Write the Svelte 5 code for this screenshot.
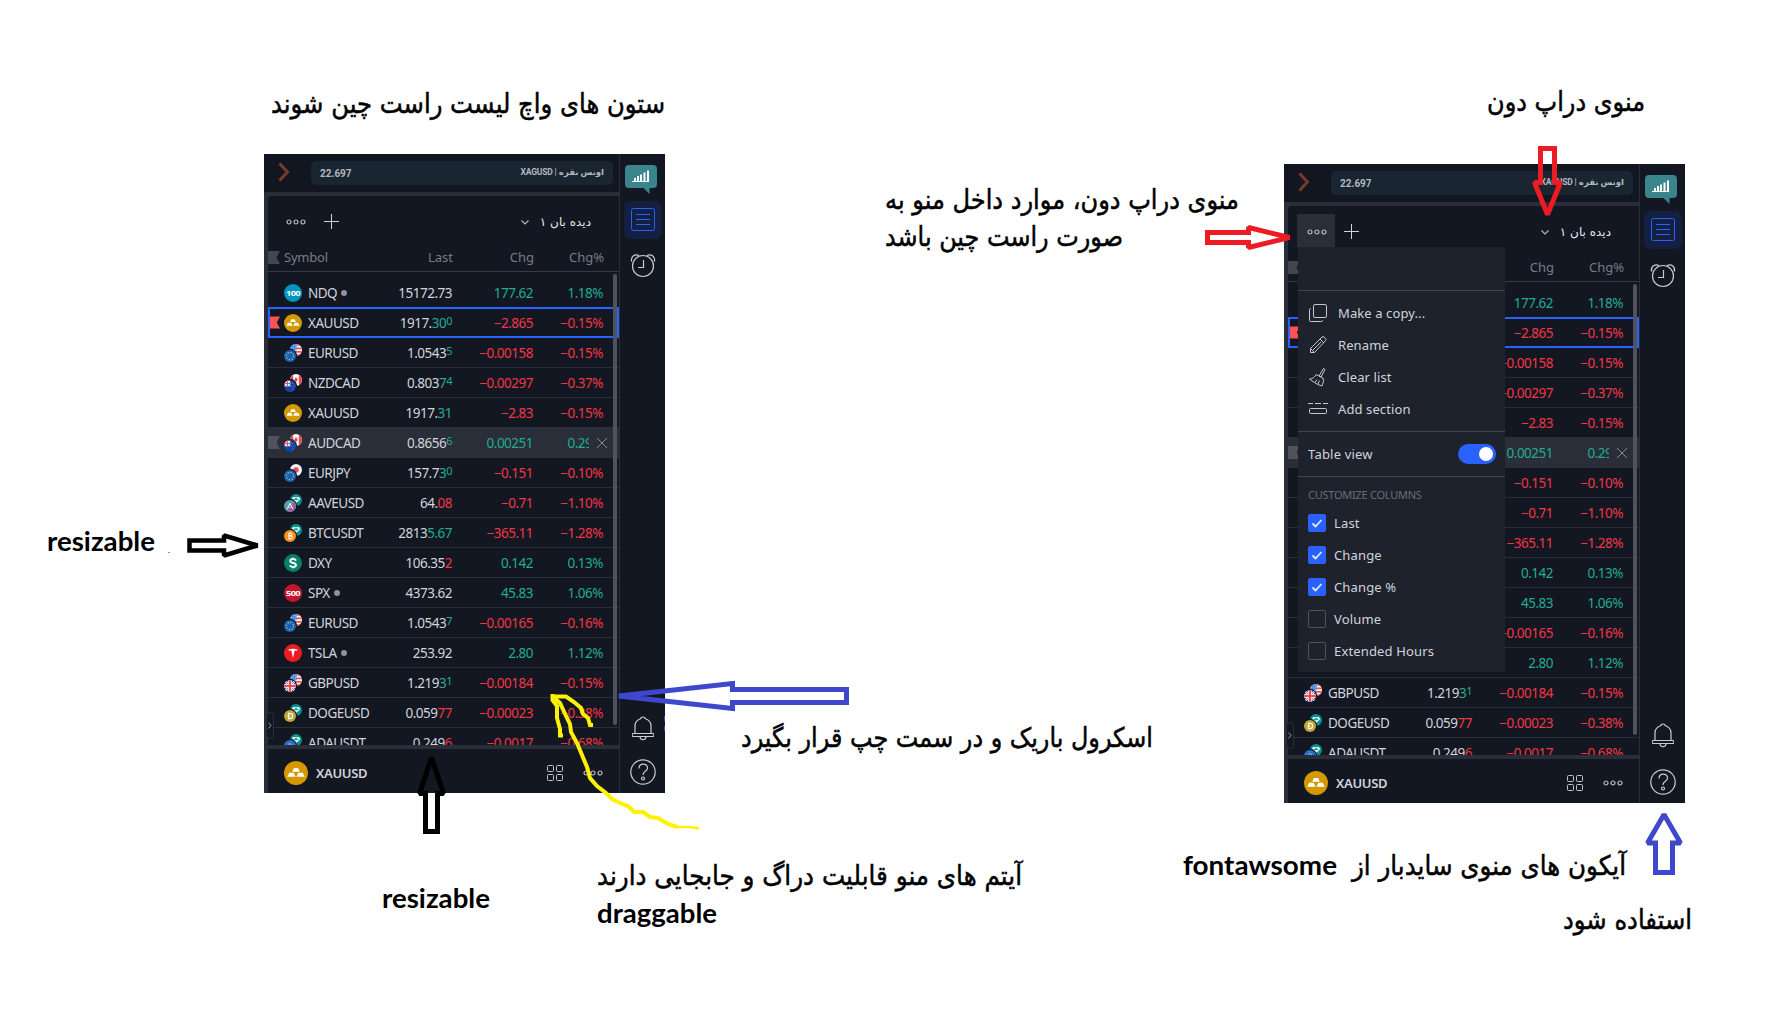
<script>
  const rows = [
    { icon: 'ndq', sym: 'NDQ', dot: true, last: '15172.73', chg: '177.62', pct: '1.18%', up: true },
    { icon: 'gold', sym: 'XAUUSD', last: '1917.', tick: '30', sup: '0', tickUp: true, chg: '−2.865', pct: '−0.15%', selected: true },
    { front: 'eu', back: 'us', sym: 'EURUSD', last: '1.0543', sup: '5', tickUp: true, chg: '−0.00158', pct: '−0.15%' },
    { front: 'nz', back: 'ca', sym: 'NZDCAD', last: '0.803', tick: '7', sup: '4', tickUp: true, chg: '−0.00297', pct: '−0.37%' },
    { icon: 'gold', sym: 'XAUUSD', last: '1917.', tick: '31', tickUp: true, chg: '−2.83', pct: '−0.15%' },
    { front: 'nz', back: 'ca', sym: 'AUDCAD', last: '0.8656', sup: '6', tickUp: true, chg: '0.00251', pct: '0.29%', up: true, hovered: true },
    { front: 'eu', back: 'jp', sym: 'EURJPY', last: '157.7', tick: '3', sup: '0', tickUp: true, chg: '−0.151', pct: '−0.10%' },
    { front: 'aave', back: 'tether', sym: 'AAVEUSD', last: '64.', tick: '08', chg: '−0.71', pct: '−1.10%' },
    { front: 'btc', back: 'tether', sym: 'BTCUSDT', last: '2813', tick: '5.67', tickUp: true, chg: '−365.11', pct: '−1.28%' },
    { icon: 'dxy', sym: 'DXY', last: '106.35', tick: '2', chg: '0.142', pct: '0.13%', up: true },
    { icon: 'spx', sym: 'SPX', dot: true, last: '4373.62', chg: '45.83', pct: '1.06%', up: true },
    { front: 'eu', back: 'us', sym: 'EURUSD', last: '1.0543', sup: '7', tickUp: true, chg: '−0.00165', pct: '−0.16%' },
    { icon: 'tsla', sym: 'TSLA', dot: true, last: '253.92', chg: '2.80', pct: '1.12%', up: true },
    { front: 'gb', back: 'us', sym: 'GBPUSD', last: '1.219', tick: '3', sup: '1', tickUp: true, chg: '−0.00184', pct: '−0.15%' },
    { front: 'doge', back: 'tether', sym: 'DOGEUSD', last: '0.059', tick: '77', chg: '−0.00023', pct: '−0.38%' },
    { front: 'ada', back: 'tether', sym: 'ADAUSDT', last: '0.249', tick: '6', chg: '−0.0017', pct: '−0.68%' }
  ];
  const columns = [
    { label: 'Last', on: true },
    { label: 'Change', on: true },
    { label: 'Change %', on: true },
    { label: 'Volume', on: false },
    { label: 'Extended Hours', on: false }
  ];
  const actions = [
    { label: 'Make a copy...', icon: 'copy' },
    { label: 'Rename', icon: 'pencil' },
    { label: 'Clear list', icon: 'broom' },
    { label: 'Add section', icon: 'section' }
  ];
  // x is the left edge of each note, w its width, y its baseline
  const notes = [
    { x: 271, y: 113, w: 394, t: 'ستون های واچ لیست راست چین شوند', fa: true },
    { x: 1487, y: 111, w: 158, t: 'منوی دراپ دون', fa: true },
    { x: 885, y: 209, w: 354, t: 'منوی دراپ دون، موارد داخل منو به', fa: true },
    { x: 885, y: 246, w: 238, t: 'صورت راست چین باشد', fa: true },
    { x: 741, y: 747, w: 412, t: 'اسکرول باریک و در سمت چپ قرار بگیرد', fa: true },
    { x: 597, y: 885, w: 425, t: 'آیتم های منو قابلیت دراگ و جابجایی دارند', fa: true },
    { x: 1352, y: 875, w: 274, t: 'آیکون های منوی سایدبار از', fa: true },
    { x: 1563, y: 929, w: 129, t: 'استفاده شود', fa: true },
    { x: 47, y: 551, w: 108, t: 'resizable' },
    { x: 382, y: 908, w: 108, t: 'resizable' },
    { x: 597, y: 923, w: 120, t: 'draggable' },
    { x: 1183, y: 875, w: 154, t: 'fontawsome' }
  ];
</script>

{#snippet gold(size)}
  <svg class="coin" width={size} height={size} viewBox="0 0 18 18">
    <circle cx="9" cy="9" r="9" fill="#d59900" />
    <path d="M7.4 5.2h3.2l1.2 2.8H6.2zM4 8.8h3.2l1.5 3H2.4zM10.8 8.8H14l1.6 3H9.3z" fill="#fff" />
  </svg>
{/snippet}

{#snippet flag(kind)}
  {#if kind === 'us'}
    <rect width="12" height="12" fill="#fff" />
    <path d="M0 1h12M0 4.4h12M0 7.8h12M0 11.2h12" stroke="#ef5350" stroke-width="1.7" />
    <rect width="6.5" height="6.5" fill="#2d8bea" />
    <path d="M1 1.6h5M1 3.4h5M1 5.2h5" stroke="#d5e8fb" stroke-width=".7" stroke-dasharray=".8 1.2" />
  {:else if kind === 'ca'}
    <rect width="12" height="12" fill="#fff" />
    <path d="M0 0h3.2v12H0zM8.8 0H12v12H8.8z" fill="#ef4a50" />
    <path d="M6 3l1.8 2.5L7 7.5H5l-.8-2z" fill="#ef4a50" />
  {:else if kind === 'jp'}
    <rect width="12" height="12" fill="#f0f3fa" /><circle cx="6" cy="6" r="2.7" fill="#ef4a50" />
  {:else if kind === 'tether'}
    <rect width="12" height="12" fill="#009393" />
    <path d="M3.2 3h5.6l1.4 2.2L6 9 1.8 5.2z" fill="#fff" /><path d="M4.3 4.2h3.4M6 4.2v2.6M3.4 5.5h5.2" stroke="#009393" stroke-width=".8" />
  {:else if kind === 'eu'}
    <rect width="12" height="12" fill="#1560bd" />
    <circle cx="6" cy="6" r="3.6" fill="none" stroke="#e3df35" stroke-width="1.1" stroke-dasharray="1.1 1.72" />
  {:else if kind === 'nz'}
    <rect width="12" height="12" fill="#0c47a8" />
    <path d="M1 1l5 5M6 1L1 6" stroke="#fff" stroke-width="1.6" /><path d="M3.5 0v6.5M0 3.5h6.5" stroke="#fff" stroke-width="2" />
    <path d="M3.5 0v6.5M0 3.5h6.5" stroke="#ef4a50" stroke-width="1" />
    <path d="M8.6 3v1M10 5.5v1M7.6 6v1M9 8.6v1" stroke="#e0637a" stroke-width="1" />
  {:else if kind === 'gb'}
    <rect width="12" height="12" fill="#1e5fbf" />
    <path d="M0 0l12 12M12 0L0 12" stroke="#fff" stroke-width="2.2" /><path d="M0 0l12 12M12 0L0 12" stroke="#ef4a50" stroke-width=".9" />
    <path d="M6 0v12M0 6h12" stroke="#fff" stroke-width="3.6" /><path d="M6 0v12M0 6h12" stroke="#ef4a50" stroke-width="2.2" />
  {:else if kind === 'aave'}
    <rect width="12" height="12" fill="#5b9dac" /><path d="M12 0v12H2z" fill="#9a62a3" />
    <path d="M3.3 8.8L6 3.4l2.7 5.4M4.8 7.4h.7M6.6 7.4h.7" stroke="#fff" fill="none" stroke-width="1" />
  {:else if kind === 'btc'}
    <rect width="12" height="12" fill="#f7931a" />
    <path d="M4.7 3.3h2a1.2 1.2 0 010 2.5H4.8h2.2a1.4 1.4 0 010 2.9H4.4M5 3v6M6.2 2.2v1M6 8.8v1" stroke="#fff" fill="none" stroke-width="1" />
  {:else if kind === 'doge'}
    <rect width="12" height="12" fill="#c2a633" />
    <path d="M4.6 3.3h1.3a2.7 2.7 0 010 5.4H4.6zM3.3 6h3" stroke="#fff" fill="none" stroke-width="1.1" />
  {:else if kind === 'ada'}
    <rect width="12" height="12" fill="#2a71d0" /><circle cx="6" cy="6" r="2.2" fill="none" stroke="#fff" stroke-dasharray="1 1" />
  {/if}
{/snippet}

{#snippet symbolIcon(r)}
  {#if r.icon === 'gold'}
    {@render gold(18)}
  {:else if r.icon}
    <svg class="coin" width="18" height="18" viewBox="0 0 18 18">
      {#if r.icon === 'ndq'}
        <circle cx="9" cy="9" r="9" fill="#0097bf" /><text class="badge" x="9" y="11.6" textLength="14" lengthAdjust="spacingAndGlyphs">100</text>
      {:else if r.icon === 'spx'}
        <circle cx="9" cy="9" r="9" fill="#c5162e" /><text class="badge" x="9" y="11.6" textLength="14" lengthAdjust="spacingAndGlyphs">500</text>
      {:else if r.icon === 'dxy'}
        <circle cx="9" cy="9" r="9" fill="#08806a" />
        <path d="M12 6.6C11.5 5.4 10.3 5 9 5 7.3 5 6.2 5.8 6.2 7c0 2.8 5.8 1.2 5.8 4 0 1.3-1.3 2.1-3 2.1-1.5 0-2.7-.6-3.1-1.8M9 3.8v1.500M9 12.800v1.500" stroke="#fff" stroke-width="1.9" fill="none" />
      {:else}
        <circle cx="9" cy="9" r="9" fill="#ec1c24" />
        <path d="M4.5 5.6c3-1.3 6-1.3 9 0l-.6 1.3c-1-.3-1.6-.4-2.2-.4L9 14 7.3 6.5c-.6 0-1.2.1-2.2.4z" fill="#fff" />
      {/if}
    </svg>
  {:else}
    <svg class="coin" width="18" height="18" viewBox="0 0 18 18">
      <g transform="translate(6 0)" clip-path="url(#disc)">{@render flag(r.back)}</g>
      <circle cx="6" cy="12" r="7.2" class="ring" />
      <g transform="translate(0 6)" clip-path="url(#disc)">{@render flag(r.front)}</g>
    </svg>
  {/if}
{/snippet}

{#snippet ellipsis()}
  <svg width="20" height="6" viewBox="0 0 20 6" fill="none" stroke="#b8bbc5" stroke-width="1.2"><circle cx="3" cy="3" r="2" /><circle cx="10" cy="3" r="2" /><circle cx="17" cy="3" r="2" /></svg>
{/snippet}

{#snippet ribbon(cls)}
  <svg class="ribbon {cls}" width="12" height="13" viewBox="0 0 12 13"><path d="M0 0h12L8.5 6.5 12 13H0z" /></svg>
{/snippet}

{#snippet panel(open)}
  <div class="main">
    <header class="ticker">
      <svg class="collapse" width="14" height="20" viewBox="0 0 14 20"><path d="M2.5 1.5l8 8.5-8 8.5" fill="none" stroke="#793a2b" stroke-width="3" /></svg>
      <div class="pill"><span>22.697</span><span class="pair" dir="rtl">اونس نقره | <bdi>XAGUSD</bdi></span></div>
    </header>
    <div class="body">
      <section class="watch">
        <div class="toolbar">
          <span class="more" class:active={open}>{@render ellipsis()}</span>
          <svg class="plus" width="15" height="15" viewBox="0 0 15 15"><path d="M7.5 0v15M0 7.5h15" stroke="#d1d4dc" /></svg>
          <svg class="chev" width="8" height="5" viewBox="0 0 8 5"><path d="M.5.5L4 4 7.5.5" fill="none" stroke="#b2b5be" stroke-width="1.2" /></svg>
          <span class="listname" dir="rtl">دیده بان ۱</span>
        </div>
        <div class="row head">
          {@render ribbon('dim')}
          <span class="sym">Symbol</span><span>Last</span><span>Chg</span><span>Chg%</span>
        </div>
        <div class="list">
          {#each rows as r}
            <div class="row" class:selected={r.selected} class:hovered={r.hovered}>
              {#if r.selected}{@render ribbon('red')}{/if}
              {#if r.hovered}{@render ribbon('gray')}{/if}
              <span class="sym">{@render symbolIcon(r)}<span class="name">{r.sym}</span>{#if r.dot}<i class="dot"></i>{/if}</span>
              <span class="last">{r.last}<b class:up={r.tickUp}>{r.tick ?? ''}{#if r.sup}<em>{r.sup}</em>{/if}</b></span>
              <span class="move" class:up={r.up}>{r.chg}</span>
              <span class="move" class:up={r.up}>{r.pct}</span>
              {#if r.hovered}
                <span class="remove"><svg width="10" height="10" viewBox="0 0 10 10"><path d="M0 0l10 10M10 0L0 10" stroke="#868993" /></svg></span>
              {/if}
            </div>
          {/each}
        </div>
        <div class="thumb"></div>
      </section>
      <section class="detail">
        {@render gold(24)}
        <strong>XAUUSD</strong>
        <svg class="tiles" width="16" height="16" viewBox="0 0 16 16" fill="none" stroke="#c1c4cd"><rect x=".5" y=".5" width="6" height="6" rx="1" /><rect x="9.5" y=".5" width="6" height="6" rx="1" /><rect x=".5" y="9.5" width="6" height="6" rx="1" /><rect x="9.5" y="9.5" width="6" height="6" rx="1" /></svg>
        {@render ellipsis()}
      </section>
    </div>
    <div class="handle"><svg width="4" height="7" viewBox="0 0 4 7"><path d="M.5.5l2.5 3-2.5 3" fill="none" stroke="#9a9da7" /></svg></div>
  </div>
  <nav class="side">
    <svg class="bubble" width="32" height="29" viewBox="0 0 32 29">
      <path d="M4 0h24a4 4 0 014 4v15a4 4 0 01-4 4h-3.5v6l-6-6H4a4 4 0 01-4-4V4a4 4 0 014-4z" fill="#3a848b" />
      <path d="M10 16v-3M13 16v-5M16 16V9.5M19.500 16V7.5M23 16V5.5" stroke="#fff" stroke-width="2" /><path d="M7 16.5h17" stroke="#fff" />
    </svg>
    <span class="tab"><svg width="24" height="23" viewBox="0 0 24 23" fill="none" stroke="#2962ff"><rect x=".5" y=".5" width="23" height="22" rx="2" /><path d="M5 6.5h14M5 11.5h14M5 16.5h14" /></svg></span>
    <svg class="clock" width="26" height="25" viewBox="0 0 26 25" fill="none" stroke="#c9ccd5" stroke-width="1.2"><circle cx="13" cy="13" r="10.500" /><path d="M13.5 7v7.5H8M1.500 8.500C.6 3.500 5 .4 9 2.500M24.500 8.500C25.400 3.500 21 .4 17 2.500" /></svg>
    <svg class="bell" class:raised={open} width="22" height="25" viewBox="0 0 22 25" fill="none" stroke="#c9ccd5" stroke-width="1.2"><path d="M3 17.5V10c0-4 2.500-6 5-7 .8-.4 1.500-2 3-2s2.200 1.600 3 2c2.500 1 5 3 5 7v7.500M1.500 17.500h19a.8.8 0 010 3h-19a.8.8 0 010-3zM8 21c.5 3.600 5.500 3.600 6 0" /></svg>
    <svg class="help" width="26" height="26" viewBox="0 0 26 26" fill="none" stroke="#c9ccd5" stroke-width="1.2"><circle cx="13" cy="13" r="12.2" /><path d="M9 9.500c0-6 8.500-5.600 8.500-.6 0 3.600-4.500 3.200-4.500 7.100" /><circle cx="13" cy="19.500" r="1.500" /></svg>
  </nav>
{/snippet}

<main class="board">
  <div class="panel first">{@render panel(false)}</div>
  <div class="panel second">
    {@render panel(true)}
    <div class="menu">
      <div class="blank"></div>
      <div class="actions">
        {#each actions as a}
          <div class="item">
            <svg width="20" height="20" viewBox="0 0 20 20" fill="none" stroke="#c5c8d1">
              {#if a.icon === 'copy'}
                <rect x="5.5" y="1.5" width="13" height="13" rx="1.5" /><path d="M3 5.5h-.5a1 1 0 00-1 1v11a1 1 0 001 1h11a1 1 0 001-1V17" />
              {:else if a.icon === 'pencil'}
                <path d="M2.5 17.5v-4L14 2a1.500 1.500 0 012 0l1.600 1.600a1.500 1.500 0 010 2L6.500 17.500zM2.500 13.500l4 4M12 4l4 4M13 7l-8 8" />
              {:else if a.icon === 'broom'}
                <path d="M15.500 1.500l1.500 1-4 7.500-2-1zM8 7.500l7 3.500c1 3 0 5.500-1 8l-4-1.500-2-1-3-2-3.500-2.500c3 0 5.500-2 6.500-4.500zM10 17l1.500-3.500M7 15.500l2-3" />
              {:else}
                <path d="M0 4.500h5M7 4.500h6M15 4.500h5" stroke-width="1.2" /><rect x="1.500" y="9.500" width="17" height="5" rx="1" />
              {/if}
            </svg>
            <span>{a.label}</span>
          </div>
        {/each}
      </div>
      <div class="view"><span>Table view</span><i class="switch"></i></div>
      <div class="cols">
        <div class="caption">CUSTOMIZE COLUMNS</div>
        {#each columns as c}
          <div class="check">
            <span class="box" class:on={c.on}>{#if c.on}<svg width="12" height="9" viewBox="0 0 12 9"><path d="M1.5 4.5l3 3 6-6.500" fill="none" stroke="#e3e9fb" stroke-width="1.8" /></svg>{/if}</span>
            <span>{c.label}</span>
          </div>
        {/each}
      </div>
    </div>
  </div>

  <svg class="ink" width="1766" height="1024" viewBox="0 0 1766 1024">
    <defs><clipPath id="disc"><circle cx="6" cy="6" r="6" /></clipPath></defs>
    {#each notes as n}
      <text class="note" class:fa={n.fa} x={n.x} y={n.y} textLength={n.w} lengthAdjust="spacingAndGlyphs">{n.t}</text>
    {/each}
    <g fill="none" stroke-width="5" stroke-miterlimit="1.5">
      <g stroke="#000">
        <path d="M189.5 540.5H224V535.5L257.500 545.5 224 555.5V550.5H189.5z" stroke-width="4.5" />
        <path d="M431.500 757.500L443.500 793.500H437.500V831.500H425.500V793.500H419.500z" />
      </g>
      <g stroke="#ed1c24">
        <path d="M1207.500 232.500H1248.500V227.500L1289.500 237.500 1248.500 247.500V242.500H1207.500z" />
        <path d="M1540.500 148.500H1554.500V182.500H1560.500L1547.500 214.500 1534.500 182.500H1540.500z" />
      </g>
      <g stroke="#3f48cc">
        <path d="M619 696L732.500 683.500V689.500H846.500V702.500H732.500V708.500z" />
        <path d="M1664 814.500L1680.500 843H1672.500V872.500H1655.500V843H1647.500z" />
        <path d="M664.500 716v5M664.500 726v5" stroke-width="1" />
      </g>
      <g stroke="#fff200" stroke-width="4">
        <path d="M552 696L560 703 566 716 570 724 571 732 577 743 582 755 587 767 590 778 597 786 606 793 612 799 622 804 628 806 634 812 643 812 650 817 658 818 668 824 677 827" />
        <path d="M675 827L690 827 699 828.500" stroke-width="2.5" />
        <path d="M551 696.500H566L574 702 581 708 583 714 588 718 590 725H593M552.500 694V700L557 706V718L560 729V735.500H563" />
      </g>
    </g>
    <rect x="168" y="552" width="2" height="1" fill="#5aa5c8" />
  </svg>
</main>

<style>
  :global(body) { margin: 0; background: #fff; }
  .board { position: relative; width: 1766px; height: 1024px; overflow: hidden; background: #fff; font-family: "Noto Sans", "DejaVu Sans", sans-serif; }
  .panel { position: absolute; display: flex; width: 401px; height: 639px; background: #131722; color: #d1d4dc; font-size: 13px; }
  .first { left: 264px; top: 154px; }
  .second { left: 1284px; top: 164px; }
  svg { display: block; flex: none; }
  .main { position: relative; width: 355px; display: flex; flex-direction: column; border-right: 1px solid #2a2e39; }
  .ticker { height: 38px; display: flex; align-items: flex-start; box-sizing: border-box; padding: 7px 6px 0 13px; gap: 20px; background: #111620; }
  .collapse { margin-top: 1px; }
  .pill { flex: 1; height: 24px; display: flex; justify-content: space-between; align-items: center; padding: 0 9px; background: #192530; border-radius: 5px; font: 700 10px Roboto, "DejaVu Sans", sans-serif; color: #b4b8c0; }
  .pair { font-size: 8.5px; letter-spacing: -.15px; margin-top: -3px; }
  .pair bdi { letter-spacing: -.2px; }
  .body { flex: 1; display: flex; flex-direction: column; gap: 4px; padding: 4px 0 0 4px; background: #2a2e39; min-height: 0; }
  .watch { position: relative; height: 549px; display: flex; flex-direction: column; background: #131722; border-top-left-radius: 4px; overflow: hidden; }
  .toolbar { display: flex; align-items: center; height: 50px; padding-right: 28px; }
  .more { display: flex; align-items: center; justify-content: center; width: 38px; height: 35px; margin: 1px 0 0 9px; }
  .active { background: #2a2e39; box-sizing: border-box; padding-left: 2px; }
  .plus { margin-left: 9px; }
  .chev { margin-left: auto; margin-top: 3px; }
  .listname { margin-left: 14px; font: 12px "DejaVu Sans", sans-serif; letter-spacing: -.15px; color: #e6e8ee; width: 48px; margin-top: 2px; white-space: nowrap; }
  .row { position: relative; display: grid; grid-template-columns: 97px 87px 81px 70px; height: 29px; align-items: center; border-bottom: 1px solid #2a2e39; text-align: right; letter-spacing: -.5px; white-space: nowrap; font-size: 13.5px; }
  .head { height: 25px; flex: none; color: #787b86; letter-spacing: 0; font-size: 13px; border-color: #363a45; }
  .head span { margin-top: -3px; }
  .head span:nth-of-type(n + 2) { margin-right: -1px; }
  .head .sym { padding-left: 16px; letter-spacing: -.2px; }
  .list { padding-top: 6px; flex: 1; min-height: 0; overflow: hidden; }
  .sym { display: flex; align-items: center; padding-left: 16px; text-align: left; }
  .name { margin-left: 6px; }
  .dot { width: 6px; height: 6px; margin-left: 4px; border-radius: 50%; background: #8f929c; }
  .last b { font-weight: 400; color: #f23645; }
  .last b.up, .move.up { color: #22ab94; }
  .move { color: #f23645; }
  .last em { font-style: normal; font-size: 11px; vertical-align: 3px; line-height: 1; }
  .selected::after { content: ""; position: absolute; inset: -1px 0 -1px 0; border: 2px solid #2962ff; }
  .hovered { background: #2a2e39; }
  .remove { position: absolute; left: 321px; top: 0; width: 30px; height: 29px; background: #2a2e39; display: flex; align-items: center; padding-left: 8px; box-sizing: border-box; }
  .ribbon { position: absolute; left: 0; top: 8px; }
  .head .ribbon { top: 5px; }
  .dim { fill: #434651; }
  .gray { fill: #50535e; }
  .red { fill: #ff5252; left: 1px; width: 11px; }
  .ring { fill: #131722; }
  .hovered .ring { fill: #2a2e39; }
  .badge { font: 700 7.5px "Open Sans", sans-serif; fill: #fff; text-anchor: middle; }
  .thumb { position: absolute; left: 345px; top: 78px; width: 4px; height: 451px; border-radius: 2px; background: #50535e; }
  .detail { flex: 1; display: flex; align-items: center; padding: 4px 16px 0 16px; background: #131722; }
  .detail strong { font-size: 13px; font-weight: 600; margin-left: 8px; letter-spacing: -.3px; }
  .tiles { margin: 0 20px 0 auto; }
  .handle { position: absolute; left: 2px; top: 558px; width: 6px; height: 25px; display: flex; align-items: center; justify-content: center; border: 1px solid #2a2e39; border-radius: 4px; background: #131722; }
  .side { width: 45px; display: flex; flex-direction: column; align-items: flex-start; }
  .bubble { margin: 11px 0 0 5px; }
  .tab { display: flex; align-items: center; justify-content: center; width: 38px; height: 38px; margin: 7px 0 0 4px; border-radius: 7px; background: #132042; box-sizing: border-box; padding-bottom: 1px; }
  .clock { margin: 14px 0 0 10px; }
  .bell { margin: auto 0 18px 12px; }
  .raised { margin-bottom: 21px; }
  .help { margin: 0 0 8px 10px; }
  .menu { position: absolute; left: 14px; top: 83px; width: 207px; height: 425px; background: #1e222d; font-size: 13px; color: #d1d4dc; white-space: nowrap; }
  .blank { height: 43px; border-bottom: 1px solid #434651; }
  .actions { padding: 6px 0; height: 128px; border-bottom: 1px solid #434651; letter-spacing: .1px; }
  .item { display: flex; align-items: center; gap: 10px; height: 32px; padding-left: 10px; }
  .view { display: flex; align-items: center; justify-content: space-between; height: 44px; padding: 0 9px 0 10px; border-bottom: 1px solid #434651; letter-spacing: .2px; }
  .switch { position: relative; width: 38px; height: 20px; border-radius: 10px; background: #2962ff; }
  .switch::after { content: ""; position: absolute; right: 3px; top: 3px; width: 14px; height: 14px; border-radius: 50%; background: #fff; }
  .cols { padding: 7px 0 0 10px; }
  .caption { height: 23px; line-height: 22px; font-size: 11px; letter-spacing: -.25px; color: #6a6d78; }
  .check { display: flex; align-items: center; gap: 8px; height: 32px; letter-spacing: .15px; }
  .box { width: 18px; height: 18px; box-sizing: border-box; border: 1px solid #50535e; border-radius: 2px; display: flex; align-items: center; justify-content: center; }
  .on { background: #2962ff; border-color: #2962ff; }
  .ink { position: absolute; left: 0; top: 0; }
  .note { font: 700 27px Lato, sans-serif; fill: #000; }
  .fa { font: 400 27px "DejaVu Sans", sans-serif; stroke: #000; stroke-width: .5px; }
</style>
